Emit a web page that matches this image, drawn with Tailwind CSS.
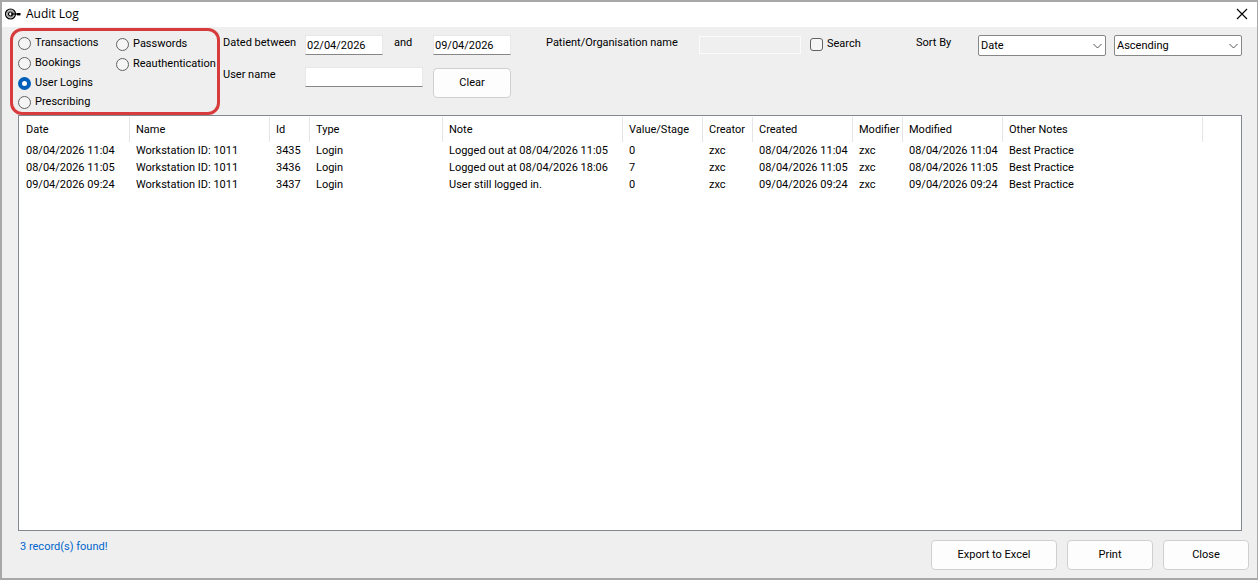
<!DOCTYPE html>
<html lang="en">

<head>
    <meta charset="UTF-8">
    <meta name="viewport" content="width=device-width, initial-scale=1.0">
    <title>Audit Log</title>
    <script src="https://cdn.jsdelivr.net/npm/@tailwindcss/browser@4"></script>
</head>

<body class="bg-[#efefef] text-black text-[11px] leading-4 font-['Roboto','Liberation_Sans',sans-serif]">
    <div class="min-h-screen flex flex-col border-2 border-r border-[#a8a8a8]">

        <!-- Title bar -->
        <header class="h-[25px] shrink-0 bg-white flex items-center pl-[3px] pr-[9px] pb-[2px]">
            <svg class="w-4 h-4 mr-[5px]" viewBox="0 0 16 16" fill="none" stroke="#000" aria-hidden="true">
                <circle cx="5.5" cy="8" r="5" fill="#ddd" stroke-width="1.2" />
                <circle cx="5.5" cy="8" r="3.4" stroke="#888" stroke-width=".8" />
                <circle cx="5.5" cy="8" r="2" fill="#fff" stroke-width="1.2" />
                <path d="M6 8h8" stroke-width="1.3" />
                <path d="M12 7h3.5v2.4H12z" fill="#000" stroke="none" />
            </svg>
            <h1 class="text-xs font-['Open_Sans',sans-serif]">Audit Log</h1>
            <button type="button" aria-label="Close window" class="ml-auto">
                <svg class="w-3 h-3" viewBox="0 0 12 12" fill="none" stroke="#000" stroke-width="1.1">
                    <path d="M1 1l10 10M11 1L1 11" />
                </svg>
            </button>
        </header>

        <!-- Filters -->
        <form class="h-[88px] shrink-0 flex items-start pl-2 pr-[15px] whitespace-nowrap">
            <fieldset class="w-[210px] h-[87px] mt-px shrink-0 border-3 border-[#d83b3b] rounded-xl pl-[5px] pt-[2px] flex items-start relative z-10">
                <div class="w-[98px]">
                    <label class="h-5 flex items-center gap-1">
                        <input type="radio" name="logType" class="appearance-none size-[13px] rounded-full border border-[#626262] bg-[#f5f5f5] checked:border-4 checked:border-[#005fb8] checked:bg-white">
                        Transactions
                    </label>
                    <label class="h-5 flex items-center gap-1">
                        <input type="radio" name="logType" class="appearance-none size-[13px] rounded-full border border-[#626262] bg-[#f5f5f5] checked:border-4 checked:border-[#005fb8] checked:bg-white">
                        Bookings
                    </label>
                    <label class="h-5 flex items-center gap-1">
                        <input type="radio" name="logType" checked class="appearance-none size-[13px] rounded-full border border-[#626262] bg-[#f5f5f5] checked:border-4 checked:border-[#005fb8] checked:bg-white">
                        User Logins
                    </label>
                    <label class="h-[18px] flex items-center gap-1">
                        <input type="radio" name="logType" class="appearance-none size-[13px] rounded-full border border-[#626262] bg-[#f5f5f5] checked:border-4 checked:border-[#005fb8] checked:bg-white">
                        Prescribing
                    </label>
                </div>
                <div class="pt-px">
                    <label class="h-5 flex items-center gap-1">
                        <input type="radio" name="logType" class="appearance-none size-[13px] rounded-full border border-[#626262] bg-[#f5f5f5] checked:border-4 checked:border-[#005fb8] checked:bg-white">
                        Passwords
                    </label>
                    <label class="h-5 flex items-center gap-1">
                        <input type="radio" name="logType" class="appearance-none size-[13px] rounded-full border border-[#626262] bg-[#f5f5f5] checked:border-4 checked:border-[#005fb8] checked:bg-white">
                        Reauthentication
                    </label>
                </div>
            </fieldset>

            <div class="ml-[3px] pt-2 grid grid-cols-[82px_118px_78px] gap-y-3 items-start">
                <label for="dateFrom">Dated between</label>
                <div class="flex items-start">
                    <input id="dateFrom" type="text" value="02/04/2026" class="w-[78px] h-5 px-px bg-white border border-[#e8e8e8] border-b-[#868686]">
                    <label for="dateTo" class="ml-[11px]">and</label>
                </div>
                <input id="dateTo" type="text" value="09/04/2026" class="w-[78px] h-5 ml-[10px] px-px bg-white border border-[#e8e8e8] border-b-[#868686]">
                <label for="userName">User name</label>
                <input id="userName" type="text" class="w-[118px] h-5 px-px bg-white border border-[#e8e8e8] border-b-[#868686]">
                <button type="button" class="w-[78px] h-[30px] ml-[10px] mt-px bg-[#fdfdfd] border border-[#d0d0d0] rounded">Clear</button>
            </div>

            <div class="ml-[45px] pt-2 flex items-start">
                <label for="patientName" class="w-[153px]">Patient/Organisation name</label>
                <input id="patientName" type="text" disabled class="w-[102px] h-[18px] mt-px border border-[#fbfbfb]">
                <label class="ml-[9px] h-[18px] flex items-center gap-1">
                    <input type="checkbox" class="appearance-none size-[13px] border border-[#626262] rounded-[3px] bg-[#f5f5f5]">
                    Search
                </label>
            </div>

            <div class="ml-auto pt-2 flex items-start">
                <label for="sortField" class="w-[62px]">Sort By</label>
                <div class="relative">
                    <select id="sortField" class="appearance-none block w-32 h-[21px] pl-[2px] bg-white border border-[#868686] rounded-[2px]">
                        <option>Date</option>
                    </select>
                    <svg class="absolute right-1 top-[7px] w-[9px] h-2 pointer-events-none" viewBox="0 0 9 8" fill="none" stroke="#555"><path d="M.5 2l4 4 4-4" /></svg>
                </div>
                <div class="relative ml-2">
                    <select id="sortOrder" aria-label="Sort order" class="appearance-none block w-32 h-[21px] pl-[2px] bg-white border border-[#868686] rounded-[2px]">
                        <option>Ascending</option>
                    </select>
                    <svg class="absolute right-1 top-[7px] w-[9px] h-2 pointer-events-none" viewBox="0 0 9 8" fill="none" stroke="#555"><path d="M.5 2l4 4 4-4" /></svg>
                </div>
            </div>
        </form>

        <!-- Log entries -->
        <main class="grow ml-4 mr-[15px] bg-white border border-[#828790] overflow-hidden">
            <table class="w-full table-fixed border-separate border-spacing-0 text-left whitespace-nowrap mt-px">
                <thead>
                    <tr class="h-[25px] *:px-[6px] *:font-normal *:border-r *:border-[#e5e5e5]">
                        <th class="w-[111px] pl-[7px]!">Date</th>
                        <th class="w-[140px]">Name</th>
                        <th class="w-10">Id</th>
                        <th class="w-[133px]">Type</th>
                        <th class="w-[180px]">Note</th>
                        <th class="w-20">Value/Stage</th>
                        <th class="w-[50px]">Creator</th>
                        <th class="w-[100px]">Created</th>
                        <th class="w-[50px]">Modifier</th>
                        <th class="w-[100px]">Modified</th>
                        <th class="w-[200px]">Other Notes</th>
                        <td class="border-r-0!"></td>
                    </tr>
                </thead>
                <tbody id="logRows"></tbody>
            </table>
        </main>

        <!-- Footer -->
        <footer class="h-[47px] shrink-0 flex items-start pl-[18px] pr-2">
            <p id="recordCount" class="mt-2 text-[#0066cc]"></p>
            <div class="ml-auto mt-[9px] flex gap-[10px]">
                <button type="button" class="w-[126px] h-[30px] bg-[#fdfdfd] border border-[#d0d0d0] rounded">Export to Excel</button>
                <button type="button" class="w-[86px] h-[30px] bg-[#fdfdfd] border border-[#d0d0d0] rounded">Print</button>
                <button type="button" class="w-[86px] h-[30px] bg-[#fdfdfd] border border-[#d0d0d0] rounded">Close</button>
            </div>
        </footer>
    </div>

    <script>
        const records = [
            ['08/04/2026 11:04', 'Workstation ID: 1011', '3435', 'Login', 'Logged out at 08/04/2026 11:05', '0', 'zxc', '08/04/2026 11:04', 'zxc', '08/04/2026 11:04', 'Best Practice'],
            ['08/04/2026 11:05', 'Workstation ID: 1011', '3436', 'Login', 'Logged out at 08/04/2026 18:06', '7', 'zxc', '08/04/2026 11:05', 'zxc', '08/04/2026 11:05', 'Best Practice'],
            ['09/04/2026 09:24', 'Workstation ID: 1011', '3437', 'Login', 'User still logged in.', '0', 'zxc', '09/04/2026 09:24', 'zxc', '09/04/2026 09:24', 'Best Practice'],
        ];

        // Fill the table
        const body = document.getElementById('logRows');
        records.forEach(record => {
            const row = body.insertRow();
            row.className = 'h-[17px] *:px-[6px] *:first:pl-[7px]';
            record.forEach(value => {
                row.insertCell().textContent = value;
            });
        });

        document.getElementById('recordCount').textContent = `${records.length} record(s) found!`;
    </script>
</body>

</html>
